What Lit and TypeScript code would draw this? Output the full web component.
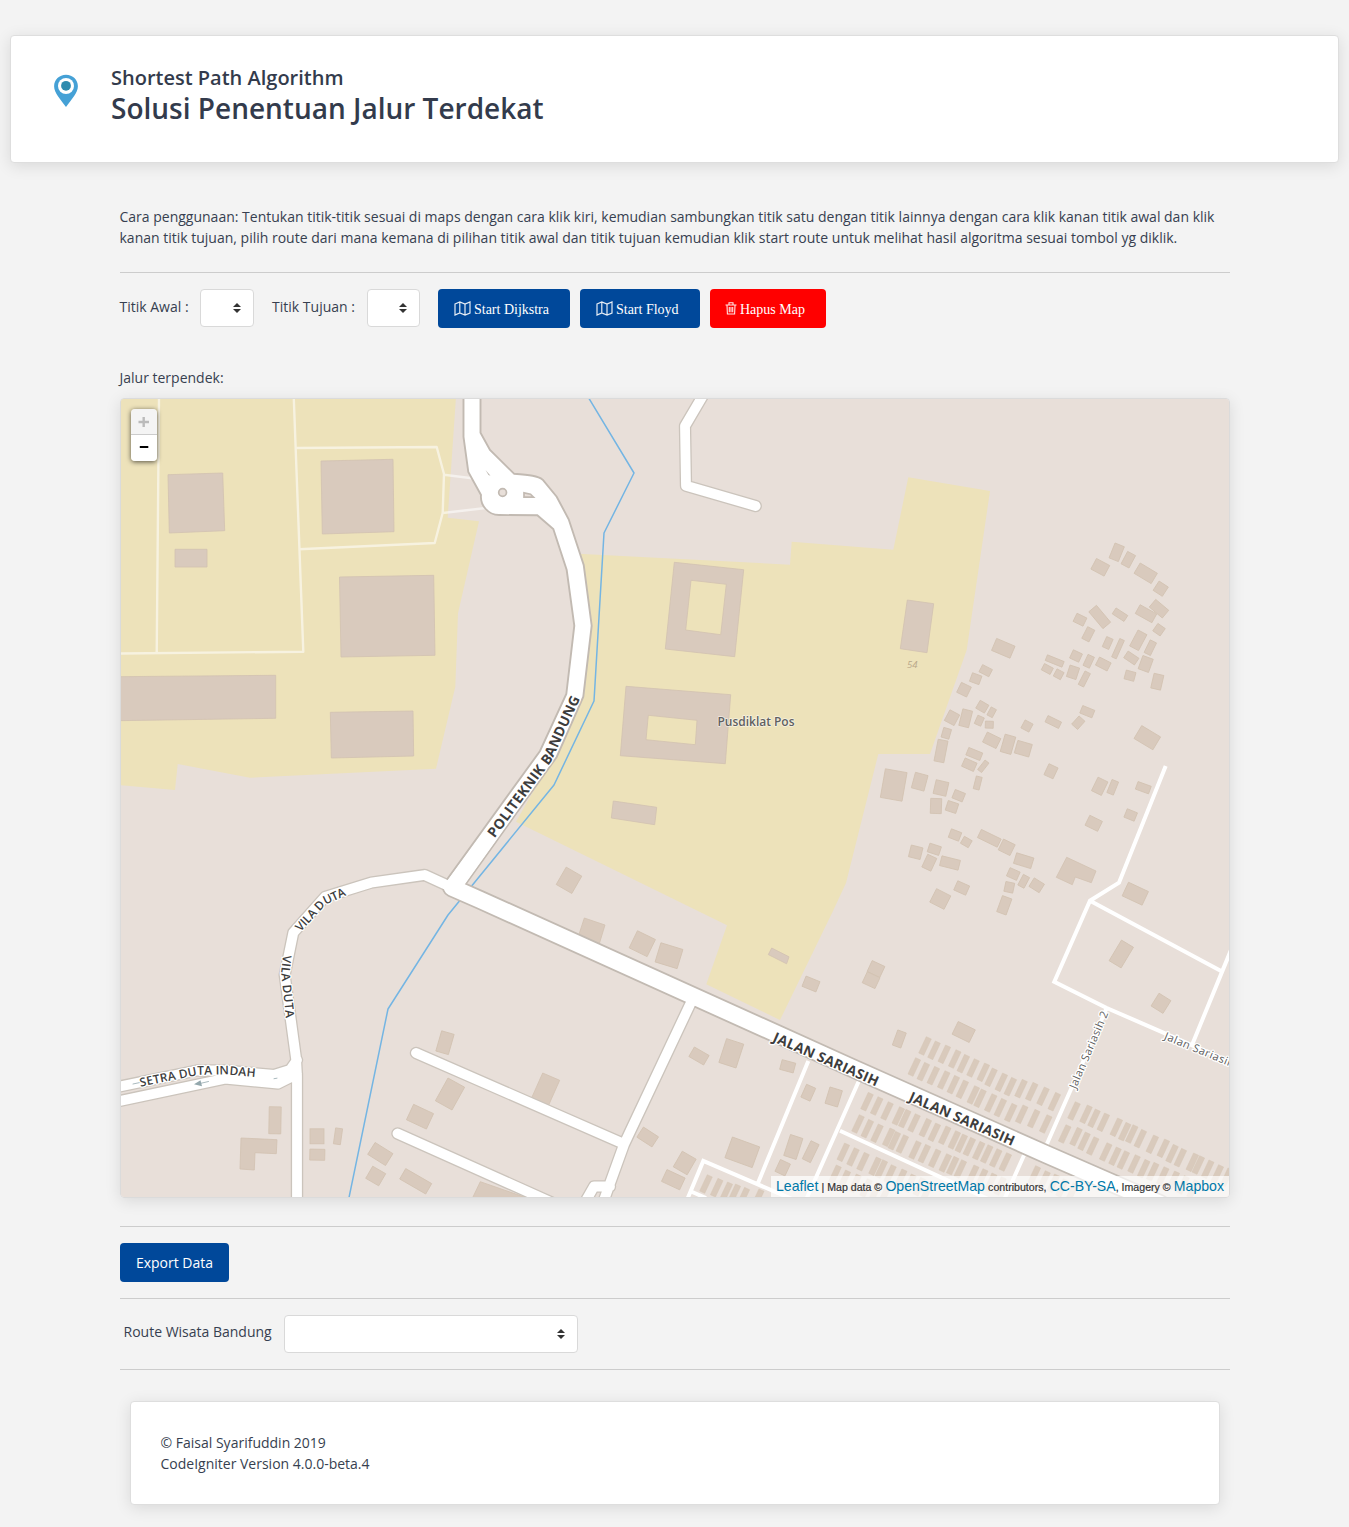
import { LitElement, html, svg, css } from "lit";
import { customElement, property } from "lit/decorators.js";

/* [centre x, centre y, width, height, rotation in degrees] */
type Block = [number, number, number, number, number];

const BLOCKS: Block[] = [
  [1116.7, 552.3, 10, 16, 22], [1128.3, 559.7, 9, 14, 28], [1100.3, 567.3, 15, 12, 28],
  [1145.7, 573.3, 20, 12, 31], [1160.7, 588.7, 11, 11, 33], [1159, 608.7, 17, 10, 40],
  [1146, 613.7, 19, 10, 29], [1159, 629.7, 9, 9, 35], [1099.7, 617, 22, 10, 50],
  [1120, 614.7, 14, 7, 33], [1080, 619.7, 11, 9, 26], [1088.3, 634.3, 8, 13, 27],
  [1107.7, 643, 7, 11, 24], [1118, 648.7, 5, 20, 24], [1138.3, 640.3, 10, 18, 28],
  [1150.3, 647.7, 7, 14, 26], [1076, 656, 10, 9, 25], [1088.7, 661.3, 7, 12, 25],
  [1103.3, 664, 13, 9, 27], [1131.3, 658, 13, 8, 34], [1145.7, 664, 11, 14, 20],
  [1130, 675.7, 10, 9, 15], [1157.3, 681.7, 10, 15, 13], [1054.7, 661, 18, 6, 22],
  [1047.3, 669, 10, 7, 28], [1058.7, 674.3, 8, 8, 28], [1073, 672.3, 10, 12, 18],
  [1084.3, 679, 6, 15, 27], [1003.3, 648.3, 20, 13, 23], [985.7, 670.7, 11, 8, 27],
  [975.7, 678.7, 10, 9, 20], [964, 689.7, 11, 11, 26], [982.3, 706.7, 10, 9, 30],
  [991.7, 712.3, 6, 9, 28], [952, 717.7, 11, 12, 28], [965.7, 718.3, 10, 17, 14],
  [979.3, 720.7, 7, 9, 24], [989.3, 724.7, 8, 7, 2], [946.3, 733.3, 8, 10, 16],
  [941, 751, 10, 22, 11], [1027, 726, 9, 9, 28], [1053.3, 722, 15, 7, 26],
  [1087.3, 711.7, 13, 8, 22], [1078.3, 722.7, 8, 11, 42], [1147.3, 737.7, 22, 15, 31],
  [991.7, 740.3, 15, 11, 26], [1008, 744.3, 11, 18, 16], [1023.3, 748.7, 15, 13, 16],
  [974.3, 754, 15, 8, 22], [969.3, 764.7, 13, 9, 24], [983.3, 766.3, 5, 12, 38],
  [977.7, 783, 6, 13, 14], [893.7, 785, 22, 29, 10], [919.7, 781.7, 13, 16, 15],
  [941, 788, 13, 14, 13], [936, 806, 11, 15, 2], [958.7, 795.7, 11, 9, 22],
  [952, 807, 11, 10, 18], [1051, 771.3, 10, 12, 25], [1099.7, 786.3, 11, 15, 26],
  [1112.7, 787.3, 7, 14, 22], [1143.3, 787.7, 14, 8, 20], [1130.7, 815, 11, 9, 22],
  [1093.7, 823.3, 14, 11, 26], [955, 835, 11, 9, 21], [966.3, 842, 9, 8, 30],
  [989.3, 838.3, 22, 9, 26], [1006.7, 847.3, 13, 12, 26], [915.7, 852.3, 12, 12, 14],
  [934.3, 849.3, 12, 9, 18], [929.3, 862.7, 10, 14, 25], [950, 863, 19, 10, 14],
  [1023.7, 860.7, 18, 11, 17], [1013.3, 874, 11, 9, 24], [1023.7, 881.3, 7, 12, 28],
  [1036.7, 885.3, 12, 10, 32], [1009.3, 887.3, 9, 10, 12], [1004.3, 905.3, 10, 17, 20],
  [961.7, 888, 13, 10, 24], [940.3, 899, 16, 15, 27], [1135.3, 893.7, 22, 15, 25],
  [1121.3, 954, 14, 24, 31], [1161, 1003.3, 14, 15, 32], [876, 969, 14, 12, 25],
  [871.1, 980.2, 14, 12, 25], [899.3, 1039, 9, 16, 20], [963.7, 1032, 19, 14, 26],
  [569, 880.3, 18, 20, 30], [642.3, 943.7, 20, 19, 26], [669, 955.7, 23, 20, 17],
  [811, 984, 15, 11, 22], [699, 1056, 17, 11, 30], [731.3, 1053.3, 18, 25, 18],
  [787.7, 1066.3, 14, 10, 15], [808.3, 1092.7, 10, 14, 24], [833.7, 1097, 13, 17, 17],
  [647.7, 1137, 18, 12, 33], [742.3, 1152.3, 29, 22, 20], [793.3, 1147, 13, 22, 18],
  [810.7, 1151.7, 9, 20, 26], [782.7, 1167.7, 11, 13, 25], [684.7, 1163, 16, 18, 30],
  [673.3, 1179.7, 20, 13, 25], [445, 1042.7, 13, 21, 16], [450, 1094, 19, 26, 29],
  [420, 1116.7, 22, 17, 25], [380.3, 1154, 21, 14, 32], [375.7, 1176, 15, 14, 30],
  [415.7, 1181.3, 30, 12, 30], [275, 1120.3, 12, 27, 1], [317, 1136.3, 14, 15, 0],
  [317.3, 1154.7, 15, 11, 1], [338, 1136.3, 7, 16, 8],
];

const CAMPUS_BLOCKS: string[] = [
  "M168 474.7 222.7 473 224.7 530.7 169.3 533Z",
  "M175 549.3H207V567H175Z",
  "M321 461 393 459.3 394 531.7 322.3 534Z",
  "M339.500 577 433.7 575.3 435 655.3 341 657Z",
  "M118 676.7 275.7 675.3V718.3L118 720.7Z",
  "M330.3 712.3 413 711 413.7 756 331.3 758Z",
  "M674.3 562.3 743.7 569.7 734.7 656.7 665.3 649ZM691 580.3 685.7 630 720.7 634.7 726.3 584.3Z",
  "M626 686.3 730.7 694.7 725.3 763.7 620.3 755.7ZM648.3 715.3 646 739.7 695.3 744.7 697 720.3Z",
  "M907.3 600 933.7 603.7 927 652.7 900.3 648.7Z",
  "M613.3 801 656.7 807.3 654.7 824.7 611.3 818Z",
  "M771.7 948 789 956.8 786.6 963.8 768.3 954.6Z",
  "M1066.7 857.3 1096 871 1091.3 882.7 1075.3 877 1072.3 884.7 1056.3 877.3Z",
  "M584.3 918 605 925 599.3 943.7 578.7 935.3Z",
  "M542.7 1073 559.7 1080.3 548.7 1105 531.7 1097.7Z",
  "M241 1138 277 1139.7 276.3 1153.7 255 1152.7 254.3 1170 240 1169Z",
  "M480.3 1181.7 530 1199 472 1199Z",
];

/* Terraced houses: centres of equally sized narrow plots */
const TERRACES: [number, number][] = [
  [925, 1046], [934, 1050.3], [944.3, 1054.3], [954.7, 1059], [963.3, 1063.7], [973, 1068], [983.3, 1072.3],
  [991, 1077.3], [1001.3, 1082.3], [1010.3, 1086.7], [1021, 1088.7], [1031.7, 1091.7], [1043, 1096.3], [1054.3, 1101.7],
  [914.3, 1067], [923.3, 1071.7], [933.3, 1075.7], [943.7, 1080], [953.3, 1084.7], [962.3, 1089.3], [973.3, 1095],
  [980, 1098.3], [990.7, 1103], [1000.3, 1107.7], [1010.7, 1112.7], [1021.7, 1114.3], [1033.7, 1118.7], [1045.7, 1124],
  [1074, 1111], [1086, 1114.3], [1094, 1118.3], [1103.3, 1122.3], [1116.3, 1127.3], [1124.7, 1131.7], [1131.7, 1134],
  [1140.3, 1138.7], [1152.3, 1144.3], [1163.3, 1148.3], [1172, 1153.7], [1180.3, 1157.7], [1192.3, 1162.3],
  [1198.3, 1165], [1207.7, 1169.3], [1217.3, 1174], [1226.7, 1177.3],
  [1064.7, 1134], [1076, 1136.7], [1084, 1141.3], [1092.7, 1146], [1105.7, 1152], [1115, 1156.3], [1123.3, 1160],
  [1134, 1164], [1143.7, 1168.7], [1152.7, 1171.7], [1162.7, 1176], [1173.3, 1180.3], [1183, 1185], [1193, 1189],
  [867, 1101.7], [876.7, 1106], [887, 1111], [898.3, 1116], [904.7, 1118.7], [914, 1123], [925.3, 1127.7],
  [934.3, 1132.3], [944.7, 1135.3], [954.3, 1140], [961.3, 1143.3], [969.3, 1146.7], [978.7, 1150.7], [986.7, 1154],
  [995.7, 1158], [1005.3, 1162],
  [858, 1124], [867.3, 1128.7], [877, 1133.3], [888.7, 1137.3], [894.3, 1140.7], [902.3, 1144], [915, 1150],
  [924.3, 1153.7], [934.7, 1158.3], [945.3, 1163], [952.7, 1165.7], [960.3, 1169], [972.7, 1174.3], [981.7, 1178],
  [990.7, 1182.3], [1000, 1186],
  [843.3, 1152.3], [853, 1157], [863, 1161.7], [875, 1166.3], [881.3, 1169], [890, 1174], [900.7, 1178.3],
  [910, 1183.3], [919.3, 1186.7], [927.3, 1190.7],
  [835, 1174.3], [844.3, 1179.3], [855, 1183.3], [866, 1188], [875, 1192], [884, 1196],
  [706, 1184], [716.7, 1187.7], [726.3, 1191.3], [734.3, 1193.3], [743.3, 1196.7], [757.7, 1198.3],
  [1034.3, 1175], [1044, 1180], [1053.3, 1183.3], [1062, 1188], [1072, 1192],
];

const ALLEYS =
  "M1165.7 766 1119 882.7 1090 900.7 1054.3 981.7 1106.7 1008 1165 1033.3 1232 1063" +
  "M1090 900.7 1221.5 971.3M1231 950 1192 1045M1106.7 1008 1046 1146" +
  "M808.300 1061 758 1183M859.3 1080 806 1200M840 1130.7 988 1199" +
  "M687 1200 703.3 1161 792 1199M690 1191 706 1198M1025 1153 1004 1200";

const PATHS =
  "M159 399 156.7 653M119 653.5 303.3 651.7 293.7 396" +
  "M295.7 448 436.7 447 444 474 442.7 512.7 434.7 543 299 549.3M444 474.7 472 478.3M442.7 513 488 507.7";

const STREETS =
  "M452 887.5 424.7 875 371 882.7 325 897 293.3 932.7 284.7 975 296 1058 297 1076V1202" +
  "M116 1087.2 197 1070.5 225 1070.5 274 1075 290 1070 297 1060M116 1101.7 225 1078.7 278 1083.5 297 1074" +
  "M690.7 1003 624 1144.5 604 1200M610 1186.5H594L584 1204" +
  "M416 1053 623 1143.5M397.5 1133.5 555 1204" +
  "M705 392 685 426 686 485.7 755.7 506";

const POLYTECHNIC =
  "M463.5 390V437L468.3 472 481 495C480 505 488 515 499 515L537.3 515.3 553.3 529 566.7 570 574.3 625.7 566.3 694 540 751" +
  " 444.5 883 460 892 556.7 757 583.3 696.7 591.7 625.7 583.7 565 568.7 519.3 556.7 496.7 542.7 479.7C538 476 530 475 514 473.7L490 450 480.5 432.7V390Z";
const SARIASIH = "M452 887.5 480 899.8 850 1067 1046.7 1154.5 1160 1204";

@customElement("street-map")
export class StreetMap extends LitElement {
  static styles = css`
    :host { display: block; position: relative; height: 798px; overflow: hidden; border: 1px solid #dbdbdb; border-radius: 4px; box-shadow: 0 3px 16px rgba(0, 0, 0, 0.11); }
    .canvas { display: block; width: 1108px; height: 798px; background: #e8dfd9; }
    .ground { fill: #ede2ba; }
    .block { fill: #d9cabd; stroke: #d2c2b1; stroke-width: 0.8; fill-rule: evenodd; }
    .terrace { fill: #d9cabc; stroke: #d4c4b3; stroke-width: 0.4; }
    .line { fill: none; stroke-linejoin: round; stroke-linecap: round; }
    .river { stroke: #74b5e3; stroke-width: 1.5; }
    .path { stroke: #fff; stroke-opacity: 0.55; stroke-width: 2.4; stroke-linecap: butt; }
    .alley { stroke: #fff; stroke-width: 4; stroke-linejoin: miter; stroke-linecap: butt; }
    .street-edge { stroke: #cbc4bc; stroke-width: 12.4; }
    .street { stroke: #fff; stroke-width: 9.8; }
    .avenue-edge { stroke: #c2bab2; stroke-width: 19.8; }
    .avenue { stroke: #fff; stroke-width: 16.2; }
    .poly-edge { fill: #fff; stroke: #c2bab2; stroke-width: 1.9; }
    .poly { fill: #fff; }
    .island { fill: #e8dfd9; stroke: #c2bab2; stroke-width: 1.7; }
    .oneway { stroke: #93a7ac; stroke-width: 0.8; }
    .arrow { fill: #93a7ac; }
    .sliver { fill: #b9b2aa; }
    text { font-family: "Open Sans", "Noto Sans", sans-serif; fill: #3d3d3d; paint-order: stroke; stroke: #fff; stroke-width: 2.5px; stroke-linejoin: round; }
    .major { font-size: 14px; font-weight: 700; }
    .minor { font-size: 12px; font-weight: 600; }
    .lane { font-size: 11px; font-weight: 500; fill: #5c5c5c; }
    .place { font-size: 12px; font-weight: 600; fill: #606060; stroke: rgba(255, 255, 255, 0.6); stroke-width: 1.5px; }
    .house { font-size: 9.5px; font-style: italic; fill: #b7a588; stroke: none; }
    .zoom { position: absolute; left: 10px; top: 10px; width: 26px; border-radius: 4px; overflow: hidden; box-shadow: 0 1px 5px rgba(0, 0, 0, 0.65); }
    .zoom-button { display: flex; align-items: center; justify-content: center; height: 26px; background: #fff; }
    .disabled { height: 25px; background: #f4f4f4; border-bottom: 1px solid #ccc; }
    .credit { position: absolute; right: 0; bottom: 0; box-sizing: border-box; width: 458px; height: 21px; padding: 0 5px; display: flex; align-items: baseline; justify-content: space-between; background: rgba(255, 255, 255, 0.7); color: #333; white-space: pre; font: 10.6px/21px "Liberation Sans", Arial, sans-serif; -webkit-text-stroke: 0.2px #333; }
    .credit a { color: #0078a8; font-size: 14.1px; -webkit-text-stroke: 0; }
  `;

  render() {
    return html`
      <svg class="canvas" viewBox="121 399 1108 798">
        <path class="ground" d="M119 397H456L447.7 517.7 479 521.3 458 613.3 455.3 686.7 436 768.7 250 777.7 177.7 764 175 790 119 785Z" />
        <path class="ground" d="M578 553.7 790 564.7 791.7 541.7 893.3 549.7 908.3 477.3 990 491 966.7 650 930 754H878.3L846 883 833 911 780 1020 706.3 984.3 727 925.3 516 821.7 550 762 576 695 584 625Z" />
        ${CAMPUS_BLOCKS.map((d) => svg`<path class="block" d=${d} />`)}
        ${BLOCKS.map(
          ([x, y, w, h, a]) =>
            svg`<rect class="block" x=${x - w / 2} y=${y - h / 2} width=${w} height=${h} transform="rotate(${a} ${x} ${y})" />`
        )}
        ${TERRACES.map(
          ([x, y]) => svg`<rect class="terrace" x=${x - 2.8} y=${y - 9} width="5.6" height="18" transform="rotate(25 ${x} ${y})" />`
        )}
        <path class="line river" d="M587.500 396 634 473 604 533 594 701 554 785 448 915 388 1009 348.500 1200" />
        <path class="line path" d=${PATHS} />
        <path class="line alley" d=${ALLEYS} />
        <path class="line street-edge" d=${STREETS} />
        <path class="line avenue-edge" d=${SARIASIH} />
        <path class="poly-edge" d=${POLYTECHNIC} />
        <path class="line street" d=${STREETS} />
        <path class="line avenue" d=${SARIASIH} />
        <path class="poly" d="M446.5 882 540 755 552 762 460 891Z" />
        <circle class="island" cx="502.6" cy="492.5" r="3.9" />
        <path class="island" d="M524 492.8 530.5 494.2 533.5 497.2H524Z" />
        <path class="sliver" d="M485.5 470 490.5 475.8 488.5 475Z" />
        <path class="line oneway" d="M133 1084 140 1082.5M200 1083.5 208.5 1081.5M274 1078.7 277 1078.2" />
        <path class="arrow" d="M194 1084.3 200.5 1080.3 202 1086.2Z" />

        <defs>
          <path id="l1" d="M494.500 838.5 551 762 583.300 692" />
          <path id="l2" d="M300.500 932 326 904.5 350 893.500" />
          <path id="l3" d="M283 955 281.2 972 286.3 1022" />
          <path id="l4" d="M140.5 1086.700 199 1074.8 225 1074.3 260 1077.5" />
        </defs>
        <text class="major"><textPath href="#l1" textLength="165">POLITEKNIK BANDUNG</textPath></text>
        <text class="minor"><textPath href="#l2" textLength="60">VILA DUTA</textPath></text>
        <text class="minor"><textPath href="#l3" textLength="63.500">VILA DUTA</textPath></text>
        <text class="minor"><textPath href="#l4" textLength="116">SETRA DUTA INDAH</textPath></text>
        <text class="major" textLength="113.500" transform="translate(772 1041) rotate(23.6)">JALAN SARIASIH</text>
        <text class="major" textLength="113.500" transform="translate(908 1100.500) rotate(23.6)">JALAN SARIASIH</text>
        <text class="lane" textLength="83" transform="translate(1076 1089.5) rotate(-67)">Jalan Sariasih 2</text>
        <text class="lane" transform="translate(1163.500 1039) rotate(22.5)" textLength="85">Jalan Sariasih 1</text>
        <text class="place" x="717.5" y="726.400" textLength="77">Pusdiklat Pos</text>
        <text class="house" x="907" y="668.300">54</text>
      </svg>
      <div class="zoom">
        <div class="zoom-button disabled">
          <svg width="12" height="12"><path d="M.5 6H11M5.7 1V11" stroke="#bbb" stroke-width="2.4" /></svg>
        </div>
        <div class="zoom-button">
          <svg width="10" height="12"><path d="M.8 5H9.3" stroke="#000" stroke-width="2" /></svg>
        </div>
      </div>
      <div class="credit"><a>Leaflet</a><span>| Map data ©</span><a>OpenStreetMap</a><span>contributors,</span><span><a>CC-BY-SA</a>, Imagery ©</span><a>Mapbox</a></div>
    `;
  }
}

@customElement("select-box")
export class SelectBox extends LitElement {
  @property({ type: Number }) width = 54;
  static styles = css`
    :host { display: block; }
    .box { box-sizing: border-box; height: 38px; padding: 0 12px 1px; display: flex; align-items: center; justify-content: flex-end; border: 1px solid #d9d9d9; border-radius: 4px; background: #fff; }
    .caret { display: block; fill: #333; }
  `;
  render() {
    return html`<div class="box" style="width:${this.width}px">
      <svg class="caret" width="8" height="10" viewBox="0 0 4 5"><path d="M2 0 0 2h4zm0 5L0 3h4z" /></svg>
    </div>`;
  }
}

const mapIcon = html`<svg class="icon" width="17" height="15" viewBox="0 0 17 15">
  <path d="M1 3 5.8 1 11 3 16 1V12L11 14 5.8 12 1 14ZM5.8 1V12M11 3V14" fill="none" stroke="#fff" stroke-opacity=".9" stroke-width="1.2" />
</svg>`;
const trashIcon = html`<svg class="icon" width="12" height="13" viewBox="0 0 12 13">
  <path d="M.5 3H11.5M4 2.8V.8H8V2.8M2 3.2 2.4 12H9.6L10 3.2M4.3 5V10.3M6 5V10.3M7.7 5V10.3" fill="none" stroke="#fff" stroke-opacity=".9" stroke-width="1.1" />
</svg>`;

@customElement("app-root")
export class AppRoot extends LitElement {
  static styles = css`
    :host { display: block; box-sizing: border-box; height: 1527px; padding: 36px 11px 0; overflow: hidden; background: #f3f3f3; color: #373f50; font: 14px/21px "Open Sans", "Noto Sans", sans-serif; }
    .card { box-sizing: border-box; background: #fff; border: 1px solid #dedede; border-radius: 4px; box-shadow: 0 3px 16px rgba(0, 0, 0, 0.11); }
    .header { display: flex; height: 128px; margin: -1px -1px 0; padding: 38px 43px 0; }
    .pin { display: block; width: 24px; height: 34px; }
    .titles { margin: -12px 0 0 33px; color: #333b4c; font-weight: 600; }
    .subtitle { margin: 0; font-size: 20px; line-height: 32px; font-weight: 600; }
    .title { margin: -1px 0 0; font-size: 28px; line-height: 30px; font-weight: 600; }
    .content { width: 1110px; margin: 43px 0 0 109px; }
    .text { margin: 0 0 0 -0.5px; white-space: nowrap; }
    .rule { height: 1px; background: #ccc; }
    .rule-a { margin-top: 24px; }
    .controls { display: flex; align-items: flex-start; margin: 16px 0 0 -0.5px; height: 39px; }
    .label { line-height: 36px; white-space: nowrap; }
    .origin { margin: 0 18px 0 11.5px; }
    .target { margin: 0 18px 0 12px; }
    .btn { box-sizing: border-box; display: flex; align-items: center; height: 39px; border-radius: 4px; background: #00489a; color: #fff; white-space: nowrap; }
    .serif { padding: 2px 16px 0; margin-right: 10px; gap: 3px; font-family: "Liberation Serif", "Times New Roman", serif; }
    .dijkstra { width: 132px; }
    .floyd { width: 120px; }
    .danger { width: 116px; padding-left: 15px; background: #f00; }
    .icon { flex: none; margin-top: -2px; }
    .result { margin: 39px 0 10px -0.5px; }
    .rule-b { margin-top: 28px; }
    .export { width: 109px; margin: 16px 0; justify-content: center; }
    .route { display: flex; align-items: flex-start; gap: 12.5px; margin: 16px 0; padding-left: 3.5px; }
    .route .label { line-height: 34px; }
    .footer { margin: 31px 10px 0; height: 104px; padding: 30px 29.5px 0; }
  `;

  render() {
    return html`
      <header class="card header">
        <svg class="pin" viewBox="0 0 24 34">
          <path d="M12 .8C5.2.8.1 5.8.1 12.2.1 19 6.5 25 12 33 17.500 25 23.900 19 23.900 12.200 23.900 5.800 18.800.8 12 .8Z" fill="#45a1d6" />
          <circle cx="12" cy="12" r="8" fill="#fff" /><circle cx="12" cy="11.800" r="4.900" fill="#2e8bae" />
        </svg>
        <div class="titles">
          <h2 class="subtitle">Shortest Path Algorithm</h2>
          <h1 class="title">Solusi Penentuan Jalur Terdekat</h1>
        </div>
      </header>
      <main class="content">
        <p class="text">
          Cara penggunaan: Tentukan titik-titik sesuai di maps dengan cara klik kiri, kemudian sambungkan titik satu dengan titik lainnya dengan cara klik kanan titik awal dan klik<br />kanan titik tujuan, pilih route dari mana kemana di pilihan titik awal dan titik tujuan kemudian klik start route untuk melihat hasil algoritma sesuai tombol yg diklik.
        </p>
        <div class="rule rule-a"></div>
        <div class="controls">
          <span class="label">Titik Awal :</span>
          <select-box class="origin" .width=${54}></select-box>
          <span class="label">Titik Tujuan :</span>
          <select-box class="target" .width=${53}></select-box>
          <div class="btn serif dijkstra">${mapIcon}Start Dijkstra</div>
          <div class="btn serif floyd">${mapIcon}Start Floyd</div>
          <div class="btn serif danger">${trashIcon}Hapus Map</div>
        </div>
        <div class="result">Jalur terpendek:</div>
        <street-map></street-map>
        <div class="rule rule-b"></div>
        <div class="btn export">Export Data</div>
        <div class="rule"></div>
        <div class="route">
          <span class="label">Route Wisata Bandung</span>
          <select-box .width=${294}></select-box>
        </div>
        <div class="rule"></div>
        <footer class="card footer">© Faisal Syarifuddin 2019<br />CodeIgniter Version 4.0.0-beta.4</footer>
      </main>
    `;
  }
}
